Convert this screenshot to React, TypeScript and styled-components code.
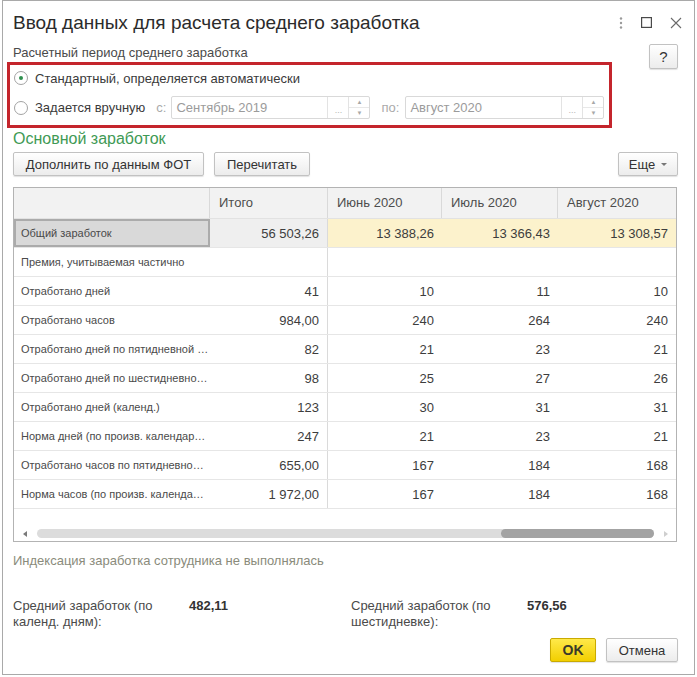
import * as React from "react";
import styled, { createGlobalStyle, css } from "styled-components";

const GlobalStyle = createGlobalStyle`
  html, body {
    margin: 0;
    padding: 0;
    background: #ffffff;
  }
  body {
    font-family: "Liberation Sans", Arial, sans-serif;
    color: #333333;
  }
`;

interface IRow {
  name: string;
  total: string;
  months: string[];
  selected?: boolean;
}

const months = ["Июнь 2020", "Июль 2020", "Август 2020"];

// names are shown as the grid shows them, already shortened
const rows: IRow[] = [
  { name: "Общий заработок", total: "56 503,26", months: ["13 388,26", "13 366,43", "13 308,57"], selected: true },
  { name: "Премия, учитываемая частично", total: "", months: ["", "", ""] },
  { name: "Отработано дней", total: "41", months: ["10", "11", "10"] },
  { name: "Отработано часов", total: "984,00", months: ["240", "264", "240"] },
  { name: "Отработано дней по пятидневной …", total: "82", months: ["21", "23", "21"] },
  { name: "Отработано дней по шестидневно…", total: "98", months: ["25", "27", "26"] },
  { name: "Отработано дней (календ.)", total: "123", months: ["30", "31", "31"] },
  { name: "Норма дней (по произв. календар…", total: "247", months: ["21", "23", "21"] },
  { name: "Отработано часов по пятидневно…", total: "655,00", months: ["167", "184", "168"] },
  { name: "Норма часов (по произв. календа…", total: "1 972,00", months: ["167", "184", "168"] },
];

const Page = styled.div`
  padding: 0 2px 2px 2px;
`;

const Dialog = styled.div`
  box-sizing: border-box;
  width: 693px;
  height: 675px;
  border: 1px solid #a9a9a9;
  background: #ffffff;
  display: flex;
  flex-direction: column;
`;

const TitleBar = styled.div`
  height: 43px;
  display: flex;
  align-items: center;
  justify-content: space-between;
  padding: 0 12px 0 10px;
`;

const Title = styled.div`
  font-size: 19px;
  color: #2b2b2b;
`;

const WindowControls = styled.div`
  display: flex;
  align-items: center;
  gap: 18px;
`;

const Content = styled.div`
  flex: 1;
  display: flex;
  flex-direction: column;
  padding: 0 16px 0 10px;
`;

const PeriodSection = styled.div`
  display: flex;
  justify-content: space-between;
  align-items: flex-start;
`;

const PeriodMain = styled.div`
  display: flex;
  flex-direction: column;
`;

const FieldLabel = styled.div`
  margin-top: 1px;
  font-size: 13px;
  line-height: 16px;
  color: #4a4a4a;
`;

const Highlight = styled.div`
  box-sizing: border-box;
  margin: 1px 0 0 -6px;
  width: 605px;
  height: 66px;
  border: 3px solid #c4252c;
  padding: 1px 0 0 4px;
  display: flex;
  flex-direction: column;
  gap: 6px;
`;

const RadioRow = styled.div<{ $height: number }>`
  height: ${(p) => p.$height}px;
  display: flex;
  align-items: center;
`;

const RadioCircle = styled.span<{ $checked?: boolean }>`
  box-sizing: border-box;
  width: 14px;
  height: 14px;
  border-radius: 50%;
  border: 1px solid #a3a3a3;
  background: #ffffff;
  display: flex;
  align-items: center;
  justify-content: center;
  margin-right: 7px;
  &::after {
    content: "";
    width: 4px;
    height: 4px;
    border-radius: 50%;
    background: ${(p) => (p.$checked ? "#2f8f4e" : "transparent")};
  }
`;

const RadioLabel = styled.span`
  font-size: 13px;
  color: #3a3a3a;
`;

const Prefix = styled.span<{ $gapRight: number }>`
  font-size: 13px;
  color: #aaaaaa;
  margin: 0 ${(p) => p.$gapRight}px 0 11px;
`;

const PeriodInput = styled.div`
  box-sizing: border-box;
  width: 199px;
  height: 23px;
  border: 1px solid #d9d9d9;
  border-radius: 2px;
  display: flex;
  align-items: stretch;
  background: #ffffff;
`;

const InputText = styled.span`
  flex: 1;
  display: flex;
  align-items: center;
  padding-left: 4px;
  font-size: 13px;
  color: #9b9b9b;
`;

const DotsButton = styled.span`
  width: 21px;
  border-left: 1px solid #e3e3e3;
  display: flex;
  align-items: center;
  justify-content: center;
  font-size: 9px;
  color: #b5b5b5;
  padding-top: 4px;
  box-sizing: border-box;
`;

const Spin = styled.span`
  width: 20px;
  border-left: 1px solid #e3e3e3;
  display: flex;
  flex-direction: column;
`;

const SpinHalf = styled.span<{ $top?: boolean }>`
  flex: 1;
  display: flex;
  align-items: center;
  justify-content: center;
  font-size: 6px;
  color: #a8a8a8;
  ${(p) =>
    p.$top &&
    css`
      border-bottom: 1px solid #e8e8e8;
    `}
`;

const buttonBase = css`
  box-sizing: border-box;
  border: 1px solid #c2c2c2;
  border-radius: 2px;
  background: linear-gradient(#ffffff, #ececec);
  box-shadow: 0 1px 1px rgba(0, 0, 0, 0.12);
  font-family: "Liberation Sans", Arial, sans-serif;
  font-size: 13px;
  color: #333333;
  display: inline-flex;
  align-items: center;
  justify-content: center;
  padding: 0;
  cursor: pointer;
`;

const HelpButton = styled.button`
  ${buttonBase};
  width: 29px;
  height: 25px;
  font-size: 15px;
`;

const GroupTitle = styled.div`
  margin-top: 2px;
  font-size: 16px;
  line-height: 18px;
  color: #3f9a55;
`;

const Toolbar = styled.div`
  margin-top: 4px;
  display: flex;
  align-items: center;
  gap: 10px;
`;

const ToolButton = styled.button<{ $width: number }>`
  ${buttonBase};
  width: ${(p) => p.$width}px;
  height: 24px;
`;

const MoreButton = styled(ToolButton)`
  margin-left: auto;
  gap: 6px;
`;

const Caret = styled.span`
  width: 0;
  height: 0;
  border-left: 3px solid transparent;
  border-right: 3px solid transparent;
  border-top: 3px solid #777777;
  margin-top: 1px;
`;

const Table = styled.div`
  box-sizing: border-box;
  margin-top: 11px;
  width: 664px;
  height: 355px;
  border: 1px solid #b3b3b3;
  display: flex;
  flex-direction: column;
  overflow: hidden;
`;

const columns = "196px 118px 114px 116px 1fr";

const HeaderRow = styled.div`
  display: grid;
  grid-template-columns: ${columns};
  height: 30px;
  background: #f2f2f2;
  border-bottom: 1px solid #e2e2e2;
`;

const HeaderCell = styled.div<{ $last?: boolean }>`
  display: flex;
  align-items: center;
  padding: 0 0 2px 9px;
  font-size: 13px;
  color: #4d4d4d;
  border-right: ${(p) => (p.$last ? "none" : "1px solid #d9d9d9")};
`;

const BodyRow = styled.div`
  display: grid;
  grid-template-columns: ${columns};
  height: 29px;
  box-sizing: border-box;
  border-bottom: 1px solid #e6e6e6;
`;

const NameCell = styled.div<{ $selected?: boolean }>`
  box-sizing: border-box;
  display: flex;
  align-items: center;
  padding: 0 0 0 7px;
  font-size: 11px;
  color: #4a4a4a;
  white-space: nowrap;
  ${(p) =>
    p.$selected &&
    css`
      background: #d9d9d9;
      border: 2px solid #ababab;
      padding-left: 5px;
    `}
`;

type Tone = "plain" | "total" | "month";

const NumCell = styled.div<{ $tone: Tone; $divider?: boolean }>`
  display: flex;
  align-items: center;
  justify-content: flex-end;
  padding-right: 8px;
  font-size: 13px;
  color: #3d3d3d;
  background: ${(p) => (p.$tone === "total" ? "#efefef" : p.$tone === "month" ? "#fcf2cc" : "transparent")};
  border-right: ${(p) => (p.$divider ? "1px solid #dadada" : "none")};
`;

const Filler = styled.div`
  flex: 1;
`;

const ScrollBar = styled.div`
  height: 13px;
  margin-bottom: 1px;
  display: flex;
  align-items: center;
  padding: 0 8px 0 9px;
`;

const Arrow = styled.span<{ $dir: "left" | "right" }>`
  width: 0;
  height: 0;
  border-top: 3px solid transparent;
  border-bottom: 3px solid transparent;
  ${(p) =>
    p.$dir === "left"
      ? css`
          border-right: 4px solid #7a7a7a;
          margin-right: 10px;
        `
      : css`
          border-left: 4px solid #cfcfcf;
          margin-left: 10px;
        `}
`;

const Track = styled.div`
  flex: 1;
  height: 9px;
  border-radius: 5px;
  background: #dcdcdc;
  display: flex;
  justify-content: flex-end;
`;

const Thumb = styled.div`
  width: 153px;
  height: 100%;
  border-radius: 5px;
  background: #a3a3a3;
`;

const Note = styled.div`
  margin-top: 11px;
  font-size: 13px;
  line-height: 16px;
  color: #8a8b7b;
`;

const Totals = styled.div`
  margin-top: 29px;
  display: grid;
  grid-template-columns: 338px 1fr;
`;

const TotalGroup = styled.div`
  display: grid;
  grid-template-columns: 176px 1fr;
`;

const TotalLabel = styled.div`
  font-size: 13px;
  line-height: 16px;
  color: #4a4a4a;
`;

const TotalValue = styled.div`
  font-size: 13px;
  line-height: 16px;
  font-weight: bold;
  color: #333333;
`;

const Footer = styled.div`
  margin-top: 8px;
  display: flex;
  justify-content: flex-end;
  gap: 10px;
`;

const FooterButton = styled.button<{ $primary?: boolean; $width: number }>`
  ${buttonBase};
  width: ${(p) => p.$width}px;
  height: 24px;
  ${(p) =>
    p.$primary &&
    css`
      background: linear-gradient(#ffe94a, #f2cf00);
      border-color: #c9aa00;
      font-weight: bold;
      font-size: 14px;
      color: #3a3a2a;
    `}
`;

const MenuDots = () => (
  <svg width="4" height="12" viewBox="0 0 4 12">
    <circle cx="2" cy="1.5" r="1.2" fill="#9a9a9a" />
    <circle cx="2" cy="6" r="1.2" fill="#9a9a9a" />
    <circle cx="2" cy="10.5" r="1.2" fill="#9a9a9a" />
  </svg>
);

const MaximizeIcon = () => (
  <svg width="11" height="11" viewBox="0 0 11 11">
    <rect x="0.6" y="0.6" width="9.8" height="9.8" fill="none" stroke="#4a4a4a" strokeWidth="1.2" />
  </svg>
);

const CloseIcon = () => (
  <svg width="12" height="12" viewBox="0 0 12 12">
    <path d="M1 1 L11 11 M11 1 L1 11" stroke="#6a6a6a" strokeWidth="1.1" />
  </svg>
);

const DateField = ({ value }: { value: string }) => (
  <PeriodInput>
    <InputText>{value}</InputText>
    <DotsButton>...</DotsButton>
    <Spin>
      <SpinHalf $top>▲</SpinHalf>
      <SpinHalf>▼</SpinHalf>
    </Spin>
  </PeriodInput>
);

export default class App extends React.Component {
  private renderRow(row: IRow) {
    const tone = row.selected ? "month" : "plain";
    return (
      <BodyRow key={row.name}>
        <NameCell $selected={row.selected}>{row.name}</NameCell>
        <NumCell $tone={row.selected ? "total" : "plain"} $divider>{row.total}</NumCell>
        {row.months.map((m, i) => (
          <NumCell key={i} $tone={tone}>{m}</NumCell>
        ))}
      </BodyRow>
    );
  }

  public render() {
    return (
      <Page>
        <GlobalStyle />
        <Dialog>
          <TitleBar>
            <Title>Ввод данных для расчета среднего заработка</Title>
            <WindowControls>
              <MenuDots />
              <MaximizeIcon />
              <CloseIcon />
            </WindowControls>
          </TitleBar>
          <Content>
            <PeriodSection>
              <PeriodMain>
                <FieldLabel>Расчетный период среднего заработка</FieldLabel>
                <Highlight>
                  <RadioRow $height={24}>
                    <RadioCircle $checked />
                    <RadioLabel>Стандартный, определяется автоматически</RadioLabel>
                  </RadioRow>
                  <RadioRow $height={23}>
                    <RadioCircle />
                    <RadioLabel>Задается вручную</RadioLabel>
                    <Prefix $gapRight={5}>с:</Prefix>
                    <DateField value="Сентябрь 2019" />
                    <Prefix $gapRight={6}>по:</Prefix>
                    <DateField value="Август 2020" />
                  </RadioRow>
                </Highlight>
              </PeriodMain>
              <HelpButton>?</HelpButton>
            </PeriodSection>

            <GroupTitle>Основной заработок</GroupTitle>
            <Toolbar>
              <ToolButton $width={191}>Дополнить по данным ФОТ</ToolButton>
              <ToolButton $width={96}>Перечитать</ToolButton>
              <MoreButton $width={60}>
                Еще <Caret />
              </MoreButton>
            </Toolbar>

            <Table>
              <HeaderRow>
                <HeaderCell />
                <HeaderCell>Итого</HeaderCell>
                {months.map((m, i) => (
                  <HeaderCell key={m} $last={i === months.length - 1}>{m}</HeaderCell>
                ))}
              </HeaderRow>
              {rows.map((r) => this.renderRow(r))}
              <Filler />
              <ScrollBar>
                <Arrow $dir="left" />
                <Track>
                  <Thumb />
                </Track>
                <Arrow $dir="right" />
              </ScrollBar>
            </Table>

            <Note>Индексация заработка сотрудника не выполнялась</Note>

            <Totals>
              <TotalGroup>
                <TotalLabel>Средний заработок (по<br />календ. дням):</TotalLabel>
                <TotalValue>482,11</TotalValue>
              </TotalGroup>
              <TotalGroup>
                <TotalLabel>Средний заработок (по<br />шестидневке):</TotalLabel>
                <TotalValue>576,56</TotalValue>
              </TotalGroup>
            </Totals>

            <Footer>
              <FooterButton $primary $width={46}>OK</FooterButton>
              <FooterButton $width={72}>Отмена</FooterButton>
            </Footer>
          </Content>
        </Dialog>
      </Page>
    );
  }
}
